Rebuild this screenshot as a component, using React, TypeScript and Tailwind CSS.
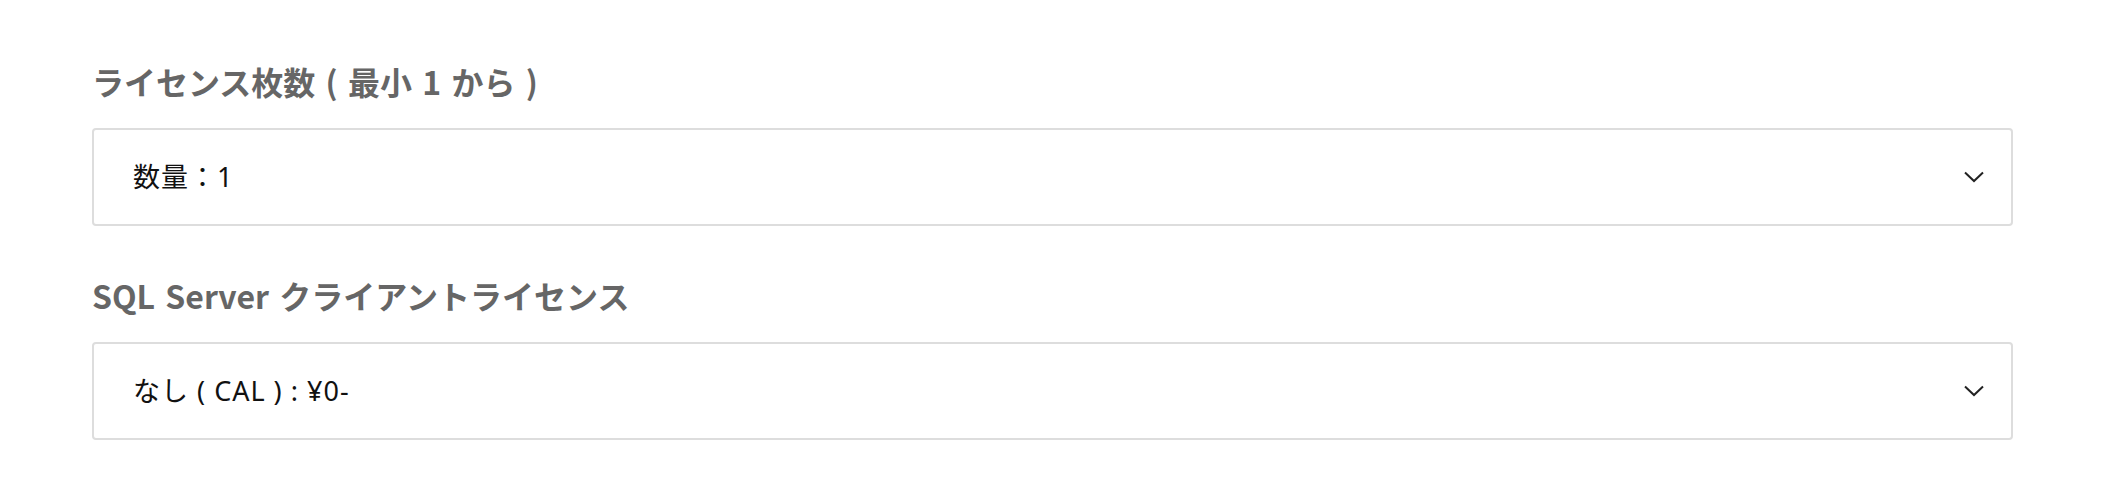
const options = [
  { label: "ライセンス枚数 ( 最小 1 から )", value: "数量：1" },
  { label: "SQL Server クライアントライセンス", value: "なし ( CAL ) : ¥0-" },
];

const Chevron = () => (
  <svg width="20" height="12" viewBox="0 0 20 12" fill="none" className="shrink-0">
    <polyline points="1,1.5 10,10 19,1.5" stroke="#222" strokeWidth="2" />
  </svg>
);

const App = () => {
  return (
    <div
      className="min-h-[494px] w-full bg-white pl-[92px] pr-[93px] pt-[61px] pb-[55px] flex flex-col gap-[49px]"
      style={{ fontFamily: '"Noto Sans CJK JP", "Noto Sans", sans-serif' }}
    >
      {options.map((opt) => (
        <div key={opt.label} className="flex flex-col gap-[27px]">
          <label className="text-[32px] leading-[40px] font-bold text-[#666666] [word-spacing:3px]">
            {opt.label}
          </label>
          <button
            type="button"
            className="h-[98px] w-full flex items-center justify-between bg-white border-2 border-[#dddddd] rounded-[4px] pl-[39px] pr-[27px] text-left"
          >
            <span
              className="text-[27px] tracking-[1px] text-[#111111]"
              style={{ fontFamily: '"Noto Sans", "Noto Sans CJK JP", sans-serif' }}
            >
              {opt.value}
            </span>
            <Chevron />
          </button>
        </div>
      ))}
    </div>
  );
};

export default App;
